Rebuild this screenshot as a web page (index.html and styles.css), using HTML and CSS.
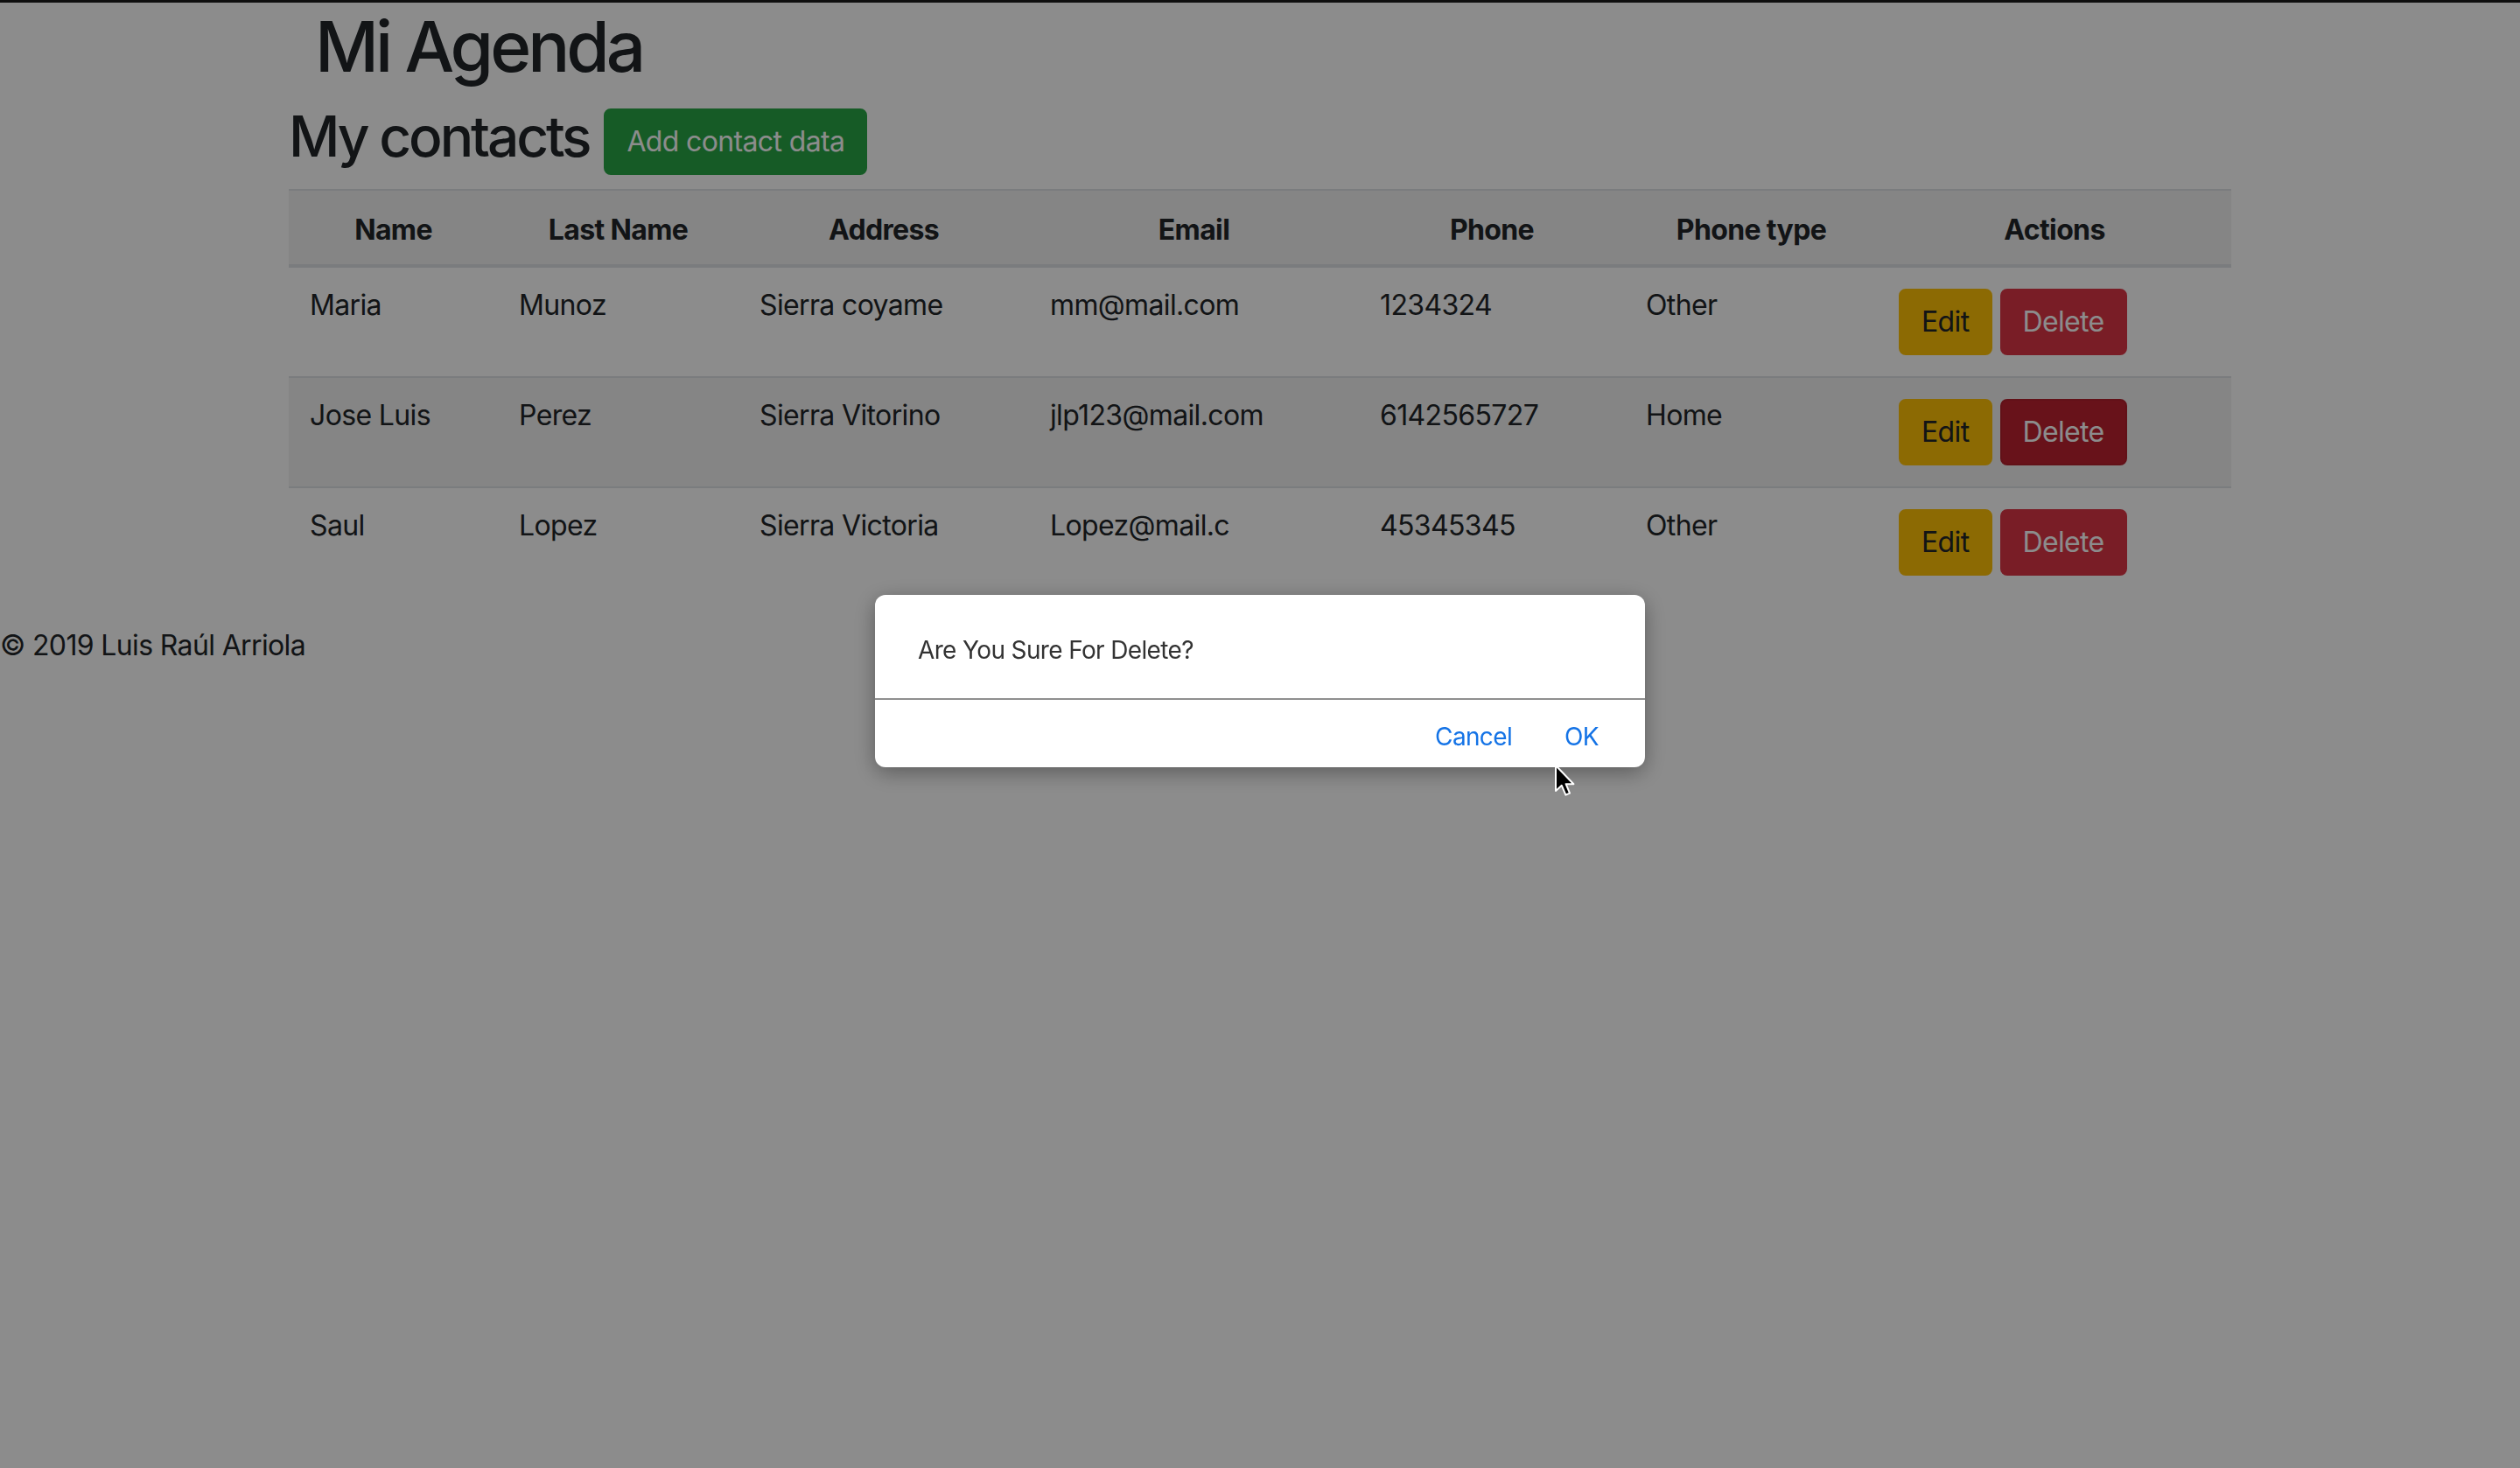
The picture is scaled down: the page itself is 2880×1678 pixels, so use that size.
FILE: index.html
```html
<!DOCTYPE html>
<html lang="es">
<head>
<meta charset="utf-8">
<title>Mi Agenda</title>
<link rel="stylesheet" href="styles.css">
</head>
<body>
<div class="topbar"></div>
<div class="container">
  <h1 class="title">Mi Agenda</h1>
  <div class="heading-row">
    <h2 class="heading">My contacts</h2>
    <button class="btn btn-success btn-add">Add contact data</button>
  </div>
  <table class="table">
    <colgroup>
      <col class="c1"><col class="c2"><col class="c3"><col class="c4"><col class="c5"><col class="c6"><col class="c7">
    </colgroup>
    <thead>
      <tr class="striped">
        <th>Name</th><th>Last Name</th><th>Address</th><th>Email</th><th>Phone</th><th>Phone type</th><th>Actions</th>
      </tr>
    </thead>
    <tbody>
      <tr>
        <td>Maria</td><td>Munoz</td><td>Sierra coyame</td><td>mm@mail.com</td><td>1234324</td><td>Other</td>
        <td><div class="actions"><button class="btn btn-warning">Edit</button><button class="btn btn-danger">Delete</button></div></td>
      </tr>
      <tr class="striped">
        <td>Jose Luis</td><td>Perez</td><td>Sierra Vitorino</td><td>jlp123@mail.com</td><td>6142565727</td><td>Home</td>
        <td><div class="actions"><button class="btn btn-warning">Edit</button><button class="btn btn-danger is-hover">Delete</button></div></td>
      </tr>
      <tr>
        <td>Saul</td><td>Lopez</td><td>Sierra Victoria</td><td>Lopez@mail.c</td><td>45345345</td><td>Other</td>
        <td><div class="actions"><button class="btn btn-warning">Edit</button><button class="btn btn-danger">Delete</button></div></td>
      </tr>
    </tbody>
  </table>
</div>
<footer class="footer">© 2019 Luis Raúl Arriola</footer>

<div class="overlay"></div>
<div class="dialog">
  <div class="dialog-msg">Are You Sure For Delete?</div>
  <div class="dialog-actions">
    <span class="dialog-btn">Cancel</span>
    <span class="dialog-btn">OK</span>
  </div>
</div>
<svg class="cursor" width="26" height="38" viewBox="0 0 13 19" aria-hidden="true">
  <path d="M1 1 L1 15.5 L4.4 12.4 L6.7 17.8 L9 16.8 L6.8 11.6 L11.2 11.6 Z" fill="#000" stroke="#fff" stroke-width="1" stroke-linejoin="round"/>
</svg>
</body>
</html>
```

FILE: styles.css
```css
* {
  box-sizing: border-box;
}

html,
body {
  margin: 0;
}

body {
  min-height: 1678px;
  background: #ffffff;
  font-family: Inter, "Noto Sans", "Liberation Sans", sans-serif;
  font-size: 32px;
  line-height: 48px;
  color: #212529;
  letter-spacing: -0.02em;
}

.topbar {
  height: 3px;
  background: #1c1c1c;
}

.container {
  width: 2280px;
  margin: 0 auto;
  padding: 0 30px;
}

.title {
  margin: 2px 0 16px 30px;
  font-size: 80px;
  font-weight: 500;
  line-height: 96px;
  letter-spacing: -0.05em;
}

.heading-row {
  display: flex;
  align-items: flex-start;
  gap: 17px;
  margin-bottom: 16px;
}

.heading {
  margin: 0;
  font-size: 64px;
  font-weight: 500;
  line-height: 77px;
  letter-spacing: -0.049em;
}

.btn {
  display: inline-block;
  font-family: inherit;
  font-size: 32px;
  line-height: 48px;
  letter-spacing: -0.02em;
  padding: 12px 24px;
  border: 2px solid transparent;
  border-radius: 8px;
  cursor: pointer;
}

.btn-add {
  margin-top: 7px;
}

.btn-success {
  background: #28a745;
  border-color: #28a745;
  color: #ffffff;
}

.btn-warning {
  background: #ffc107;
  border-color: #ffc107;
  color: #212529;
}

.btn-danger {
  background: #dc3545;
  border-color: #dc3545;
  color: #ffffff;
}

.btn-danger.is-hover {
  background: #bd2130;
  border-color: #b21f2d;
}

.table {
  width: 2220px;
  border-collapse: collapse;
  table-layout: fixed;
  margin-bottom: 32px;
}

.c1 { width: 239px; }
.c2 { width: 275px; }
.c3 { width: 332px; }
.c4 { width: 377px; }
.c5 { width: 304px; }
.c6 { width: 289px; }
.c7 { width: 404px; }

.table th {
  text-align: center;
  font-weight: 700;
  padding: 26px 24px 20px;
  line-height: 38px;
  border-top: 2px solid #dee2e6;
  border-bottom: 4px solid #dee2e6;
}

.table td {
  padding: 24px;
  line-height: 38px;
  vertical-align: top;
  text-align: left;
  border-top: 2px solid #dee2e6;
  white-space: nowrap;
}

.striped {
  background: rgba(0, 0, 0, 0.05);
}

.actions {
  display: flex;
  gap: 9px;
}

.footer {
  font-size: 32px;
  line-height: 48px;
}

.overlay {
  position: fixed;
  inset: 0;
  background: rgba(0, 0, 0, 0.45);
}

.dialog {
  position: fixed;
  left: 1000px;
  top: 680px;
  width: 880px;
  background: #ffffff;
  border-radius: 12px;
  box-shadow: 0 6px 24px rgba(0, 0, 0, 0.35);
  letter-spacing: -0.02em;
}

.dialog-msg {
  padding: 46px 49px 38px;
  font-size: 28px;
  line-height: 34px;
  color: #333333;
  border-bottom: 2px solid #8f8f8f;
}

.dialog-actions {
  display: flex;
  justify-content: flex-end;
  gap: 60px;
  padding: 25px 53px 18px;
  font-size: 28px;
  line-height: 34px;
  color: #1473e6;
}

.cursor {
  position: fixed;
  left: 1776px;
  top: 873px;
}
```
